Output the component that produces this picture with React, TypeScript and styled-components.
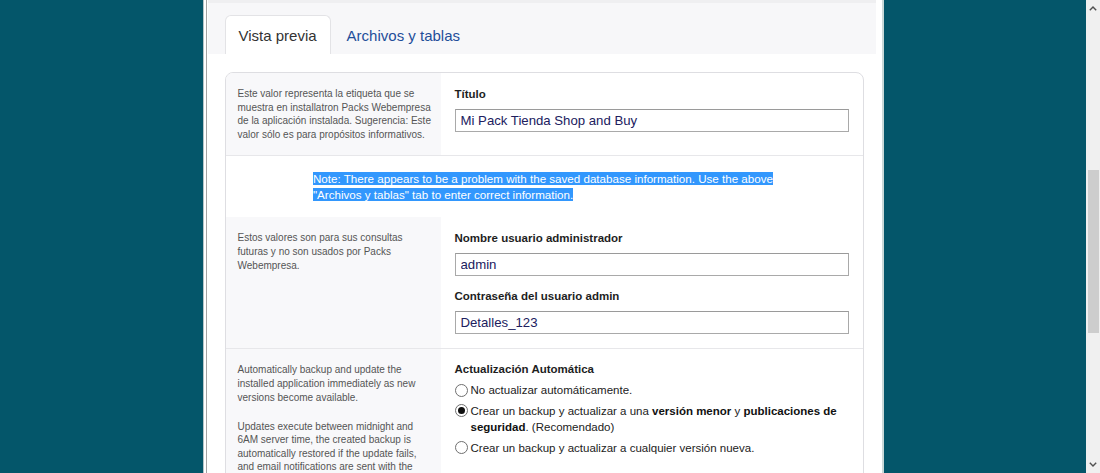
import React from 'react';
import styled, { createGlobalStyle } from 'styled-components';

// Global page reset
const GlobalStyle = createGlobalStyle`
  html, body {
    margin: 0;
    padding: 0;
    height: 100%;
    overflow: hidden;
  }
  body {
    font-family: "Liberation Sans", Arial, sans-serif;
    background: #04566a;
  }
`;

const Screen = styled.div`
  display: flex;
  height: 473px;
  overflow: hidden;
`;

const Stage = styled.main`
  flex: 1;
  min-width: 0;
  background: #04566a;
  overflow: hidden;
`;

const Panel = styled.section`
  width: 681px;
  min-height: 473px;
  margin: 0 auto;
  box-sizing: border-box;
  background: #ffffff;
  border-left: 1px solid #b6c4c7;
  border-right: 2px solid #c9d8d8;
  box-shadow: inset 2px 0 0 #ffffff, inset 3px 0 0 #a3a3a3;
  padding: 0 6px 0 4px;
`;

const TabBar = styled.div`
  display: flex;
  align-items: flex-end;
  height: 54px;
  box-sizing: border-box;
  padding: 15px 0 0 17px;
  background: #f7f7f9;
  border-top: 3px solid #efeff1;
`;

const Tab = styled.div<{ $active?: boolean }>`
  display: flex;
  align-items: center;
  height: 39px;
  box-sizing: border-box;
  padding: 0 13px;
  margin-right: 2px;
  border: 1px solid ${p => (p.$active ? '#e3e3e6' : 'transparent')};
  border-bottom: none;
  border-radius: 6px 6px 0 0;
  background: ${p => (p.$active ? '#ffffff' : 'transparent')};
  color: ${p => (p.$active ? '#333333' : '#1f4e9a')};
  font-size: 15px;
`;

const Body = styled.div`
  padding: 18px 12px 0 17px;
`;

const Card = styled.div`
  border: 1px solid #dedee2;
  border-radius: 8px;
  overflow: hidden;
`;

const Row = styled.div`
  display: grid;
  grid-template-columns: 215px 1fr;
  & + & {
    border-top: 1px solid #e7e7ea;
  }
`;

const Aside = styled.div`
  background: #f8f8fa;
  padding: 14px 8px 14px 12px;
  font-size: 10px;
  line-height: 13.6px;
  color: #555555;

  p {
    margin: 0 0 15.5px;
  }
  p:last-child {
    margin-bottom: 0;
  }
`;

const Field = styled.div`
  padding: 14px 14px 14px 14px;
`;

const Label = styled.div<{ $spaced?: boolean }>`
  font-size: 11.5px;
  font-weight: bold;
  line-height: 15px;
  color: #1e1e1e;
  margin: ${p => (p.$spaced ? '13px' : '0')} 0 7px;
`;

const GroupLabel = styled(Label)`
  margin-top: -1px;
  margin-bottom: 5px;
`;

const TextBox = styled.input`
  display: block;
  width: 100%;
  height: 23px;
  box-sizing: border-box;
  border: 1px solid #a9a9a9;
  border-top-color: #9a9a9a;
  padding: 0 5px;
  font-family: "Liberation Sans", Arial, sans-serif;
  font-size: 13.2px;
  color: #20205e;
  background: #ffffff;
  outline: none;
`;

const NoteRow = styled.div`
  border-top: 1px solid #e7e7ea;
  padding: 15px 0 14px;
`;

const NoteText = styled.div`
  width: 466px;
  margin: 0 auto;
  padding-left: 4px;
  font-size: 11.6px;
  line-height: 16px;
  color: #222222;
`;

const Selected = styled.span`
  background: #3297fd;
  color: #ffffff;
`;

const Options = styled.div`
  display: flex;
  flex-direction: column;
  gap: 4.6px;
`;

const Option = styled.label`
  display: flex;
  align-items: flex-start;
  gap: 3px;
  font-size: 11.5px;
  line-height: 16px;
  color: #222222;

  b {
    color: #111111;
  }
`;

const RadioDot = styled.span<{ $checked?: boolean }>`
  position: relative;
  flex-shrink: 0;
  width: 13px;
  height: 13px;
  margin-top: 1.5px;
  box-sizing: border-box;
  border: 1px solid #6f6f6f;
  border-radius: 50%;
  background: #ffffff;

  &::after {
    content: '';
    display: ${p => (p.$checked ? 'block' : 'none')};
    position: absolute;
    left: 2px;
    top: 2px;
    width: 7px;
    height: 7px;
    border-radius: 50%;
    background: #0f0f0f;
  }
`;

const Scrollbar = styled.div`
  display: flex;
  flex-direction: column;
  width: 14px;
  background: #f0f0f0;
`;

const ScrollArrow = styled.div`
  display: flex;
  align-items: center;
  justify-content: center;
  height: 17px;
`;

const ScrollTrack = styled.div`
  flex: 1;
  padding: 0 1px 0 2px;
`;

const ScrollThumb = styled.div`
  margin-top: 153px;
  height: 163px;
  background: #cdcdcd;
`;

const Chevron: React.FC<{ down?: boolean }> = ({ down }) => (
  <svg width="8" height="5" viewBox="0 0 8 5">
    <path
      d={down ? 'M0.8 0.8 L4 4 L7.2 0.8' : 'M0.8 4.2 L4 1 L7.2 4.2'}
      fill="none"
      stroke="#505050"
      strokeWidth="1.4"
    />
  </svg>
);

const App: React.FC = () => {
  return (
    <>
      <GlobalStyle />
      <Screen>
        <Stage>
          <Panel>
            <TabBar>
              <Tab $active>Vista previa</Tab>
              <Tab>Archivos y tablas</Tab>
            </TabBar>
            <Body>
              <Card>
                <Row>
                  <Aside>
                    Este valor representa la etiqueta que se<br />
                    muestra en installatron Packs Webempresa<br />
                    de la aplicación instalada. Sugerencia: Este<br />
                    valor sólo es para propósitos informativos.
                  </Aside>
                  <Field>
                    <Label>Título</Label>
                    <TextBox defaultValue="Mi Pack Tienda Shop and Buy" />
                  </Field>
                </Row>
                <NoteRow>
                  <NoteText>
                    <Selected>
                      Note: There appears to be a problem with the saved database information. Use the above
                    </Selected>
                    <br />
                    <Selected>"Archivos y tablas" tab to enter correct information.</Selected>
                  </NoteText>
                </NoteRow>
                <Row>
                  <Aside>
                    Estos valores son para sus consultas<br />
                    futuras y no son usados por Packs<br />
                    Webempresa.
                  </Aside>
                  <Field>
                    <Label>Nombre usuario administrador</Label>
                    <TextBox defaultValue="admin" />
                    <Label $spaced>Contraseña del usuario admin</Label>
                    <TextBox defaultValue="Detalles_123" />
                  </Field>
                </Row>
                <Row>
                  <Aside>
                    <p>
                      Automatically backup and update the<br />
                      installed application immediately as new<br />
                      versions become available.
                    </p>
                    <p>
                      Updates execute between midnight and<br />
                      6AM server time, the created backup is<br />
                      automatically restored if the update fails,<br />
                      and email notifications are sent with the
                    </p>
                  </Aside>
                  <Field>
                    <GroupLabel>Actualización Automática</GroupLabel>
                    <Options>
                      <Option>
                        <RadioDot />
                        <span>No actualizar automáticamente.</span>
                      </Option>
                      <Option>
                        <RadioDot $checked />
                        <span>
                          Crear un backup y actualizar a una <b>versión menor</b> y <b>publicaciones de</b>
                          <br />
                          <b>seguridad</b>. (Recomendado)
                        </span>
                      </Option>
                      <Option>
                        <RadioDot />
                        <span>Crear un backup y actualizar a cualquier versión nueva.</span>
                      </Option>
                    </Options>
                  </Field>
                </Row>
              </Card>
            </Body>
          </Panel>
        </Stage>
        <Scrollbar>
          <ScrollArrow>
            <Chevron />
          </ScrollArrow>
          <ScrollTrack>
            <ScrollThumb />
          </ScrollTrack>
          <ScrollArrow>
            <Chevron down />
          </ScrollArrow>
        </Scrollbar>
      </Screen>
    </>
  );
};

export default App;
